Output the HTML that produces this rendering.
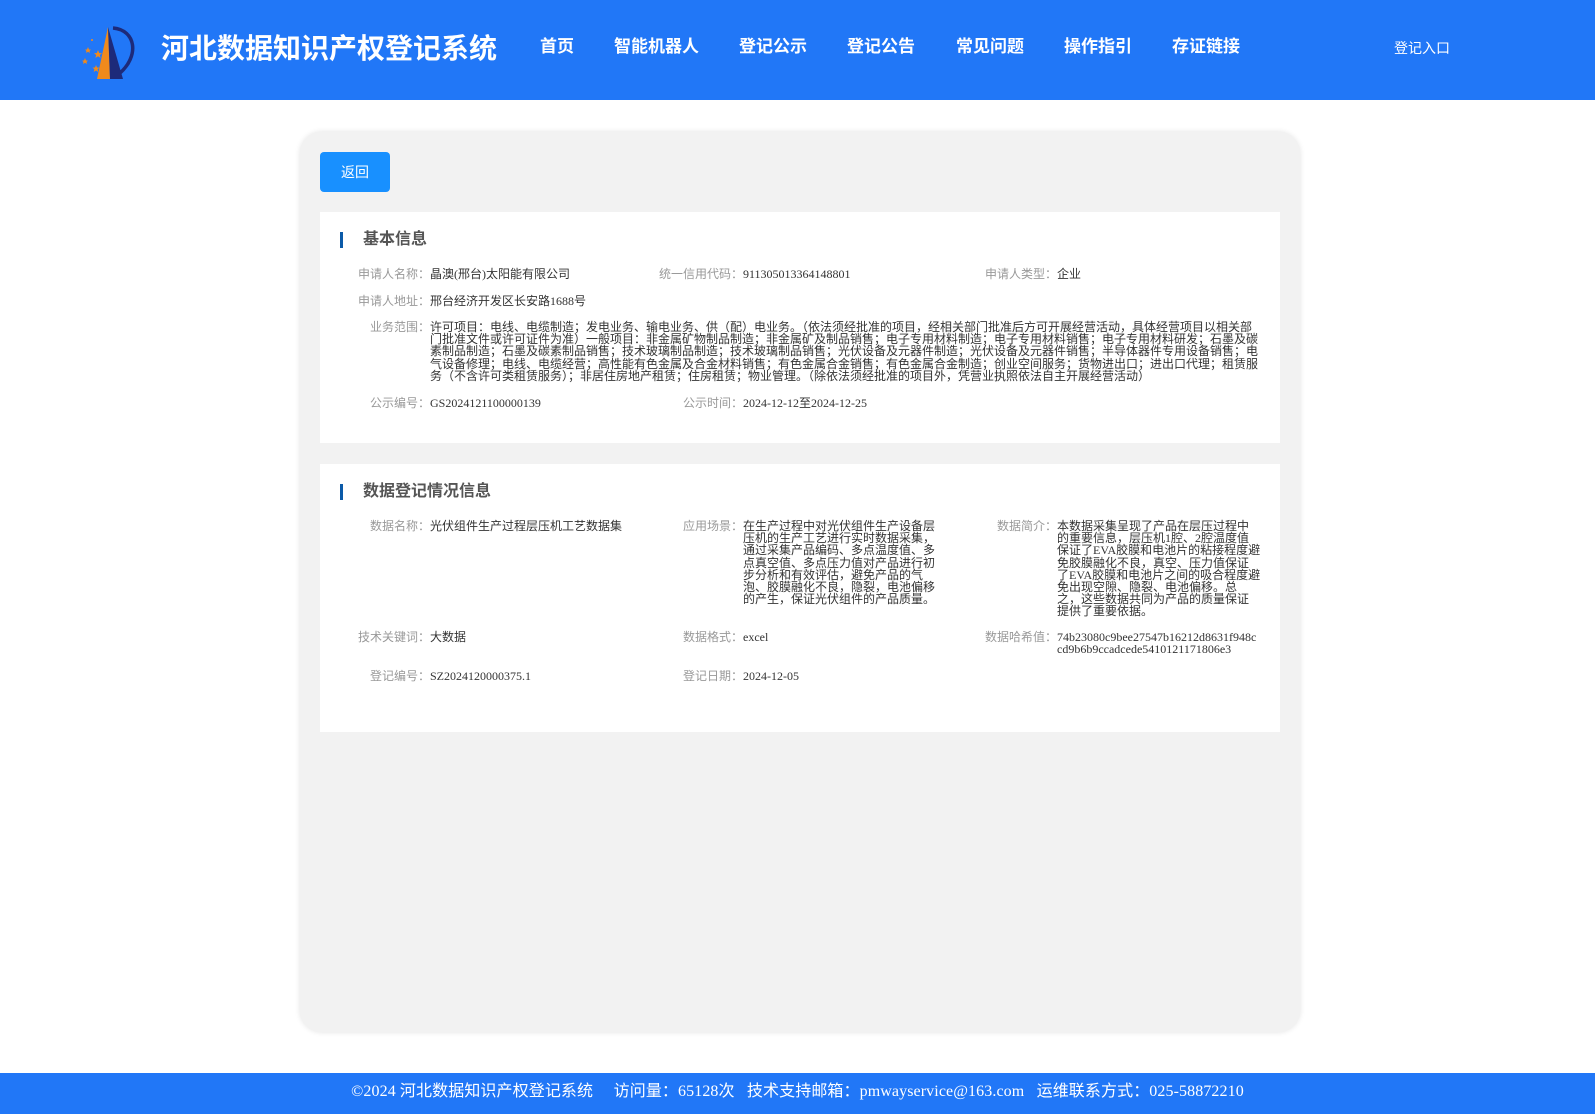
<!DOCTYPE html>
<html><head><meta charset="utf-8">
<style>
*{margin:0;padding:0;box-sizing:border-box}
body{width:1595px;height:1114px;position:relative;background:#fff;font-family:"Liberation Serif","Noto Sans CJK SC",sans-serif;overflow:hidden}
.hd{position:absolute;left:0;top:0;width:1595px;height:100px;background:#2177f7}
.title{position:absolute;left:161px;top:30px;font:bold 28px/38px "Liberation Sans","Noto Sans CJK SC",sans-serif;color:#fff}
.nav{position:absolute;top:35px;font:bold 17px/24px "Liberation Sans","Noto Sans CJK SC",sans-serif;color:#fff}
.login{position:absolute;left:1394px;top:39px;font:14px/18px "Liberation Sans","Noto Sans CJK SC",sans-serif;color:#fff}
.card{position:absolute;left:300px;top:132px;width:1000px;height:900px;background:#f2f2f2;border-radius:22px;box-shadow:0 0 6px rgba(0,0,0,.12)}
.btn{position:absolute;left:320px;top:152px;width:70px;height:40px;background:#1890ff;border-radius:4px;color:#fff;font:14px/40px "Liberation Sans","Noto Sans CJK SC",sans-serif;text-align:center}
.sec{position:absolute;left:320px;width:960px;background:#fff}
.bar{position:absolute;width:3px;height:16px;background:#0b5aa8}
.h{position:absolute;font:bold 16px/20px "Liberation Sans","Noto Sans CJK SC",sans-serif;color:#555}
.it{position:absolute;font-size:12px;line-height:12.2px;color:#333;white-space:nowrap}
.it .l{position:absolute;right:100%;color:#999;text-align:right}
.ft{position:absolute;left:0;top:1073px;width:1595px;height:41px;background:#2177f7;color:#fff;font:16px/37px "Liberation Serif","Noto Sans CJK SC",sans-serif;text-align:center;letter-spacing:0.1px}
</style></head><body>
<div class="hd">
<svg style="position:absolute;left:78px;top:22px" width="64" height="62" viewBox="78 22 64 62">
<path d="M113 28 C136 30 140 56 119 74" fill="none" stroke="#1d2a7a" stroke-width="3.5"/>
<path d="M108 27 L97 79 L110 79 Z" fill="#f08a1c"/>
<path d="M108 27 L110 79 L123 79 Z" fill="#1d2a7a"/>
<g fill="#f08a1c">
<polygon points="98,50 99.2,53 102,53.2 99.8,55 100.6,58 98,56.3 95.4,58 96.2,55 94,53.2 96.8,53"/>
<polygon points="88,47 89,49.5 91,49.6 89.5,51 90,53 88,51.8 86,53 86.5,51 85,49.6 87,49.5"/>
<polygon points="85,58 86,60.5 88,60.6 86.5,62 87,64 85,62.8 83,64 83.5,62 82,60.6 84,60.5"/>
<polygon points="96,65 97,67.5 99.5,67.6 97.6,69.2 98.3,72 96,70.5 93.7,72 94.4,69.2 92.5,67.6 95,67.5"/>
<circle cx="92" cy="40" r="1"/>
</g>
</svg>
<div class="title">河北数据知识产权登记系统</div>
<div class="nav" style="left:540px">首页</div>
<div class="nav" style="left:614px">智能机器人</div>
<div class="nav" style="left:739px">登记公示</div>
<div class="nav" style="left:847px">登记公告</div>
<div class="nav" style="left:956px">常见问题</div>
<div class="nav" style="left:1064px">操作指引</div>
<div class="nav" style="left:1172px">存证链接</div>
<div class="login">登记入口</div>
</div>

<div class="card"></div>
<div class="btn">返回</div>

<div class="sec" style="top:212px;height:231px"></div>
<div class="bar" style="left:340px;top:232px"></div>
<div class="h" style="left:363px;top:230px">基本信息</div>
<div class="it" style="left:430px;top:268px"><span class="l">申请人名称：</span>晶澳(邢台)太阳能有限公司</div>
<div class="it" style="left:743px;top:268px"><span class="l">统一信用代码：</span>911305013364148801</div>
<div class="it" style="left:1057px;top:268px"><span class="l">申请人类型：</span>企业</div>
<div class="it" style="left:430px;top:295px"><span class="l">申请人地址：</span>邢台经济开发区长安路1688号</div>
<div class="it" style="left:430px;top:321px"><span class="l">业务范围：</span>许可项目：电线、电缆制造；发电业务、输电业务、供（配）电业务。（依法须经批准的项目，经相关部门批准后方可开展经营活动，具体经营项目以相关部<br>门批准文件或许可证件为准）一般项目：非金属矿物制品制造；非金属矿及制品销售；电子专用材料制造；电子专用材料销售；电子专用材料研发；石墨及碳<br>素制品制造；石墨及碳素制品销售；技术玻璃制品制造；技术玻璃制品销售；光伏设备及元器件制造；光伏设备及元器件销售；半导体器件专用设备销售；电<br>气设备修理；电线、电缆经营；高性能有色金属及合金材料销售；有色金属合金销售；有色金属合金制造；创业空间服务；货物进出口；进出口代理；租赁服<br>务（不含许可类租赁服务）；非居住房地产租赁；住房租赁；物业管理。（除依法须经批准的项目外，凭营业执照依法自主开展经营活动）</div>
<div class="it" style="left:430px;top:397px"><span class="l">公示编号：</span>GS2024121100000139</div>
<div class="it" style="left:743px;top:397px"><span class="l">公示时间：</span>2024-12-12至2024-12-25</div>

<div class="sec" style="top:464px;height:268px"></div>
<div class="bar" style="left:340px;top:484px"></div>
<div class="h" style="left:363px;top:482px">数据登记情况信息</div>
<div class="it" style="left:430px;top:520px"><span class="l">数据名称：</span>光伏组件生产过程层压机工艺数据集</div>
<div class="it" style="left:743px;top:520px"><span class="l">应用场景：</span>在生产过程中对光伏组件生产设备层<br>压机的生产工艺进行实时数据采集，<br>通过采集产品编码、多点温度值、多<br>点真空值、多点压力值对产品进行初<br>步分析和有效评估，避免产品的气<br>泡、胶膜融化不良，隐裂，电池偏移<br>的产生，保证光伏组件的产品质量。</div>
<div class="it" style="left:1057px;top:520px"><span class="l">数据简介：</span>本数据采集呈现了产品在层压过程中<br>的重要信息，层压机1腔、2腔温度值<br>保证了EVA胶膜和电池片的粘接程度避<br>免胶膜融化不良，真空、压力值保证<br>了EVA胶膜和电池片之间的吸合程度避<br>免出现空隙、隐裂、电池偏移。总<br>之，这些数据共同为产品的质量保证<br>提供了重要依据。</div>
<div class="it" style="left:430px;top:631px"><span class="l">技术关键词：</span>大数据</div>
<div class="it" style="left:743px;top:631px"><span class="l">数据格式：</span>excel</div>
<div class="it" style="left:1057px;top:631px"><span class="l">数据哈希值：</span>74b23080c9bee27547b16212d8631f948c<br>cd9b6b9ccadcede5410121171806e3</div>
<div class="it" style="left:430px;top:670px"><span class="l">登记编号：</span>SZ2024120000375.1</div>
<div class="it" style="left:743px;top:670px"><span class="l">登记日期：</span>2024-12-05</div>

<div class="ft">©2024 河北数据知识产权登记系统&nbsp;&nbsp;&nbsp;&nbsp; 访问量：65128次&nbsp;&nbsp; 技术支持邮箱：pmwayservice@163.com&nbsp;&nbsp; 运维联系方式：025-58872210</div>
</body></html>
